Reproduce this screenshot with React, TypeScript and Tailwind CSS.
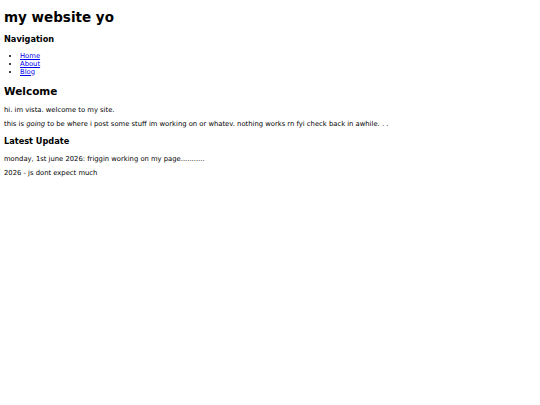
export default function App() {
  return (
    <div className="bg-white min-h-[405px] pt-[8.5px] px-[4px] text-[6.8px] leading-[normal] text-black" style={{ fontFamily: '"DejaVu Sans", sans-serif' }}>
      <h1 className="text-[13.5px] leading-[normal] font-bold mt-0 mb-[9px]">my website yo</h1>
      <h3 className="text-[8.2px] leading-[normal] font-bold mt-0 mb-[8px]">Navigation</h3>
      <ul className="list-disc pl-[16px] mt-0 mb-[9px]">
        <li><a href="#" className="text-[#0000ee] underline">Home</a></li>
        <li><a href="#" className="text-[#0000ee] underline">About</a></li>
        <li><a href="#" className="text-[#0000ee] underline">Blog</a></li>
      </ul>
      <h2 className="text-[10.5px] leading-[normal] font-bold mt-0 mb-[9px]">Welcome</h2>
      <p className="mt-0 mb-[6.5px]">hi. im vista. welcome to my site.</p>
      <p className="mt-0 mb-[8.4px]">this is <em className="italic">going</em> to be where i post some stuff im working on or whatev. nothing works rn fyi check back in awhile. . .</p>
      <h3 className="text-[8.2px] leading-[normal] font-bold mt-0 mb-[9px]">Latest Update</h3>
      <p className="mt-0 mb-[6px]">monday, 1st june 2026: friggin working on my page...........</p>
      <p className="mt-0">2026 - js dont expect much</p>
    </div>
  );
}
